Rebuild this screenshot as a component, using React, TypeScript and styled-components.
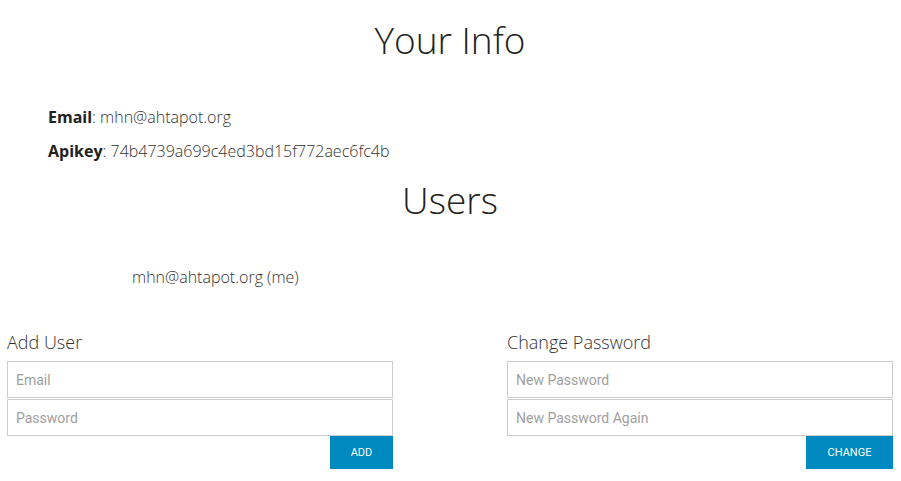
import React from "react";
import styled, { createGlobalStyle } from "styled-components";

const GlobalStyle = createGlobalStyle`
  body {
    margin: 0;
    background: #fff;
    font-family: "Open Sans", "Liberation Sans", sans-serif;
    color: #333;
  }
`;

const Page = styled.div`
  width: 901px;
  padding: 0 8px 0 7px;
  box-sizing: border-box;
`;

const Title = styled.h1`
  margin: 0;
  padding-top: 20px;
  font-size: 37px;
  line-height: 40px;
  font-weight: 300;
  text-align: center;
  color: #222;
`;

const InfoList = styled.div`
  padding: 47px 0 0 41px;
  display: flex;
  flex-direction: column;
  gap: 14px;
`;

const InfoRow = styled.div`
  font-size: 16px;
  line-height: 20px;
  font-weight: 300;
  color: #333;

  b {
    font-weight: 700;
    color: #222;
  }
`;

const UsersTitle = styled(Title)`
  padding-top: 19px;
`;

const UserList = styled.ul`
  list-style: none;
  margin: 0;
  padding: 47px 0 0 125px;
`;

const UserItem = styled.li`
  font-size: 16px;
  line-height: 20px;
  font-weight: 300;
`;

const Forms = styled.div`
  display: flex;
  justify-content: space-between;
  padding-top: 44px;
`;

const FormBox = styled.form`
  width: 386px;
  display: flex;
  flex-direction: column;
`;

const FormTitle = styled.h3`
  margin: 0 0 8px;
  font-size: 18px;
  line-height: 22px;
  font-weight: 300;
  color: #333;
`;

const Input = styled.input`
  height: 37px;
  box-sizing: border-box;
  border: 1px solid #ccc;
  padding: 0 8px;
  font-family: Roboto, "Liberation Sans", sans-serif;
  font-size: 14px;
  color: #333;
  outline: none;

  & + & {
    margin-top: 1px;
  }

  &::placeholder {
    color: #a0a0a0;
  }
`;

const Button = styled.button<{ $width: number }>`
  align-self: flex-end;
  width: ${({ $width }) => $width}px;
  height: 33px;
  border: none;
  background: #0088c0;
  color: #fff;
  font-family: Roboto, "Liberation Sans", sans-serif;
  font-size: 11px;
  text-transform: uppercase;
  cursor: pointer;
`;

export default function App() {
  return (
    <Page>
      <GlobalStyle />
      <Title>Your Info</Title>
      <InfoList>
        <InfoRow>
          <b>Email</b>: mhn@ahtapot.org
        </InfoRow>
        <InfoRow>
          <b>Apikey</b>: 74b4739a699c4ed3bd15f772aec6fc4b
        </InfoRow>
      </InfoList>
      <UsersTitle>Users</UsersTitle>
      <UserList>
        <UserItem>mhn@ahtapot.org (me)</UserItem>
      </UserList>
      <Forms>
        <FormBox onSubmit={(e) => e.preventDefault()}>
          <FormTitle>Add User</FormTitle>
          <Input type="email" placeholder="Email" />
          <Input type="password" placeholder="Password" />
          <Button type="submit" $width={63}>Add</Button>
        </FormBox>
        <FormBox onSubmit={(e) => e.preventDefault()}>
          <FormTitle>Change Password</FormTitle>
          <Input type="password" placeholder="New Password" />
          <Input type="password" placeholder="New Password Again" />
          <Button type="submit" $width={87}>Change</Button>
        </FormBox>
      </Forms>
    </Page>
  );
}
